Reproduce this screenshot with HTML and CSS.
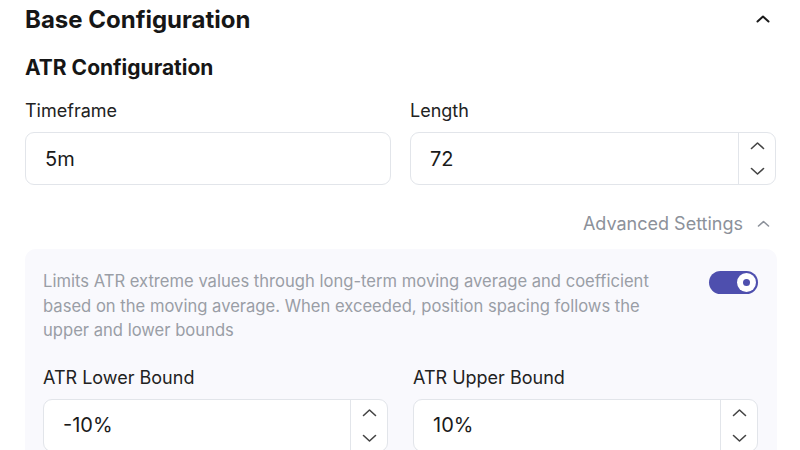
FILE: index.html
```html
<!DOCTYPE html>
<html>
<head>
<meta charset="utf-8">
<link rel="stylesheet" href="styles.css">
</head>
<body>
<div class="page">
  <div class="section-head">
    <h1 class="title">Base Configuration</h1>
    <svg class="chev-main" width="14" height="10" viewBox="0 0 14 10"><path d="M1.5 7.5 L7 2.5 L12.5 7.5" fill="none" stroke="#1a1a1a" stroke-width="2" stroke-linecap="round" stroke-linejoin="round"/></svg>
  </div>
  <h2 class="subtitle">ATR Configuration</h2>
  <div class="grid top-grid">
    <div class="field">
      <label class="label">Timeframe</label>
      <div class="input"><span class="value">5m</span></div>
    </div>
    <div class="field">
      <label class="label">Length</label>
      <div class="input number"><span class="value">72</span>
        <div class="spin">
          <svg width="15" height="9" viewBox="0 0 15 9"><path d="M1.5 7.5 L7.5 2 L13.5 7.5" fill="none" stroke="#444" stroke-width="1.6" stroke-linecap="round" stroke-linejoin="round"/></svg>
          <svg width="15" height="9" viewBox="0 0 15 9"><path d="M1.5 1.5 L7.5 7 L13.5 1.5" fill="none" stroke="#444" stroke-width="1.6" stroke-linecap="round" stroke-linejoin="round"/></svg>
        </div>
      </div>
    </div>
  </div>
  <div class="adv">
    <span class="adv-text">Advanced Settings</span>
    <svg width="13" height="10" viewBox="0 0 13 10"><path d="M1.5 7 L6.5 2.5 L11.5 7" fill="none" stroke="#8c919a" stroke-width="1.6" stroke-linecap="round" stroke-linejoin="round"/></svg>
  </div>
  <div class="panel">
    <div class="panel-top">
      <p class="desc">Limits ATR extreme values through long-term moving average and coefficient based on the moving average. When exceeded, position spacing follows the upper and lower bounds</p>
      <div class="toggle"><div class="knob"></div></div>
    </div>
    <div class="grid bound-grid">
      <div class="field">
        <label class="label">ATR Lower Bound</label>
        <div class="input number"><span class="value">-10%</span>
          <div class="spin">
            <svg width="15" height="9" viewBox="0 0 15 9"><path d="M1.5 7.5 L7.5 2 L13.5 7.5" fill="none" stroke="#444" stroke-width="1.6" stroke-linecap="round" stroke-linejoin="round"/></svg>
            <svg width="15" height="9" viewBox="0 0 15 9"><path d="M1.5 1.5 L7.5 7 L13.5 1.5" fill="none" stroke="#444" stroke-width="1.6" stroke-linecap="round" stroke-linejoin="round"/></svg>
          </div>
        </div>
      </div>
      <div class="field">
        <label class="label">ATR Upper Bound</label>
        <div class="input number"><span class="value">10%</span>
          <div class="spin">
            <svg width="15" height="9" viewBox="0 0 15 9"><path d="M1.5 7.5 L7.5 2 L13.5 7.5" fill="none" stroke="#444" stroke-width="1.6" stroke-linecap="round" stroke-linejoin="round"/></svg>
            <svg width="15" height="9" viewBox="0 0 15 9"><path d="M1.5 1.5 L7.5 7 L13.5 1.5" fill="none" stroke="#444" stroke-width="1.6" stroke-linecap="round" stroke-linejoin="round"/></svg>
          </div>
        </div>
      </div>
    </div>
  </div>
</div>
</body>
</html>
```
FILE: styles.css
```css
* { box-sizing: border-box; }
html, body { margin: 0; padding: 0; background: #fff; }
body { font-family: Inter, "Noto Sans", sans-serif; color: #1a1a1a; overflow: hidden; }
.page { padding: 0 24px 0 25px; width: 800px; }
.section-head { display: flex; align-items: center; justify-content: space-between; height: 38px; }
.title { margin: 0; font-size: 24px; font-weight: 700; line-height: 29px; color: #161616; }
.chev-main { margin-right: 6px; margin-top: 0; }
.subtitle { margin: 17px 0 0; font-size: 21px; font-weight: 700; color: #161616; line-height: 26px; }
.grid { display: grid; grid-template-columns: 1fr 1fr; }
.top-grid { column-gap: 19px; margin-top: 19px; }
.field { display: flex; flex-direction: column; }
.label { font-size: 18px; line-height: 22px; color: #222; }
.top-grid .label { margin-bottom: 10px; }
.input { display: flex; align-items: center; height: 53px; border: 1px solid #e2e5ea; border-radius: 9px; background: #fff; }
.value { flex: 1; padding-left: 19px; font-size: 20px; color: #1a1a1a; }
.spin { width: 37px; height: 100%; border-left: 1px solid #e2e5ea; display: flex; flex-direction: column; align-items: center; justify-content: center; gap: 17px; }
.adv { display: flex; justify-content: flex-end; align-items: center; gap: 14px; margin-top: 28px; padding-right: 6px; height: 22px; }
.adv-text { font-size: 18px; line-height: 22px; color: #8c919a; }
.panel { margin-top: 14px; margin-right: -1px; background: #f9f9fd; border-radius: 11px; padding: 20px 19px 20px 18px; }
.panel-top { display: flex; justify-content: space-between; align-items: flex-start; }
.desc { margin: 0; font-size: 16.6px; line-height: 24.5px; color: #9a9ea6; width: 620px; }
.toggle { width: 49px; height: 23px; background: #4e4fae; border-radius: 12px; margin-top: 2px; position: relative; flex-shrink: 0; }
.knob { position: absolute; right: 2px; top: 2px; width: 19px; height: 19px; border-radius: 50%; background: #fff; }
.knob::after { content: ""; position: absolute; left: 6px; top: 6px; width: 7px; height: 7px; border-radius: 50%; background: #4e4fae; }
.bound-grid { column-gap: 25px; margin-top: 24px; }
.bound-grid .label { margin-bottom: 10px; }
```
